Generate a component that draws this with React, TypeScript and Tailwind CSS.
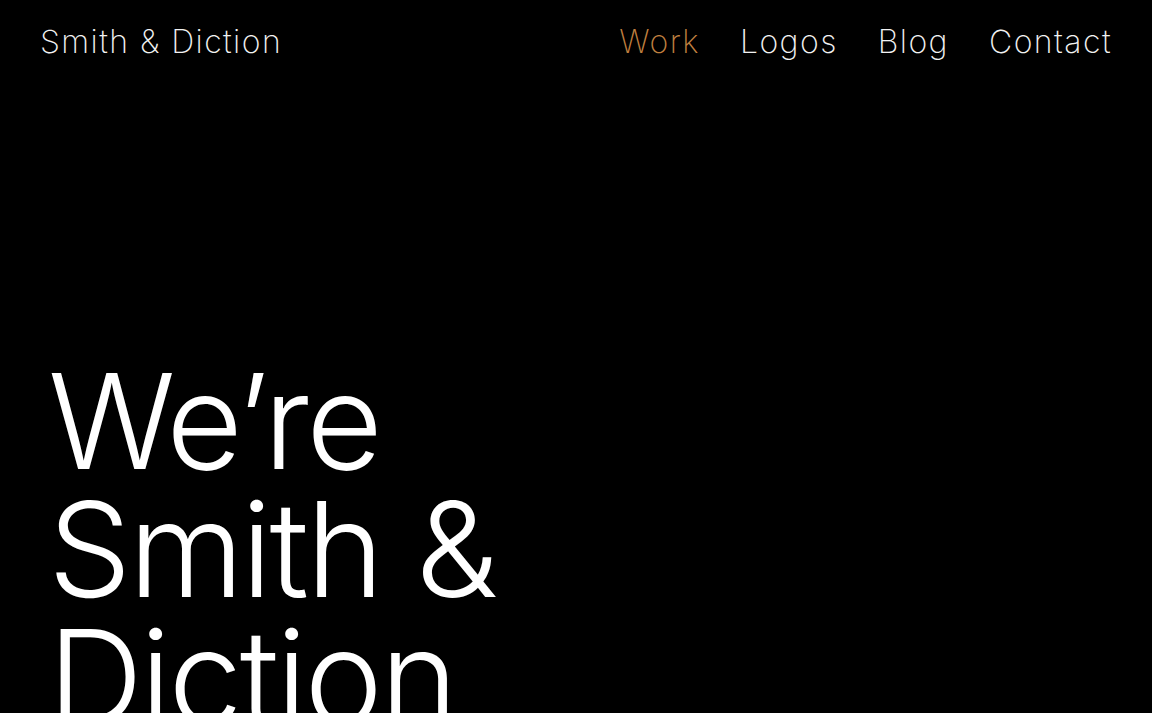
export default function App() {
  const links = ["Work", "Logos", "Blog", "Contact"];

  return (
    <div
      className="min-h-screen bg-black text-white overflow-hidden"
      style={{ fontFamily: "Inter, 'Liberation Sans', sans-serif" }}
    >
      <header className="h-[84px] px-10 flex items-center justify-between">
        <a className="text-[32px] font-extralight tracking-[0.045em] text-[#f2f2f2]">Smith &amp; Diction</a>
        <nav className="flex items-center gap-10">
          {links.map((link, i) => (
            <a
              key={link}
              className={`text-[32px] font-extralight tracking-[0.045em] ${i === 0 ? "text-[#bf7f3f]" : "text-[#f2f2f2]"}`}
            >
              {link}
            </a>
          ))}
        </nav>
      </header>
      <main className="px-12 pt-[273px]">
        <h1 className="text-[132px] leading-[128px] font-light tracking-[-0.02em]">
          We’re
          <br />
          Smith &amp;
          <br />
          Diction
        </h1>
      </main>
    </div>
  );
}
